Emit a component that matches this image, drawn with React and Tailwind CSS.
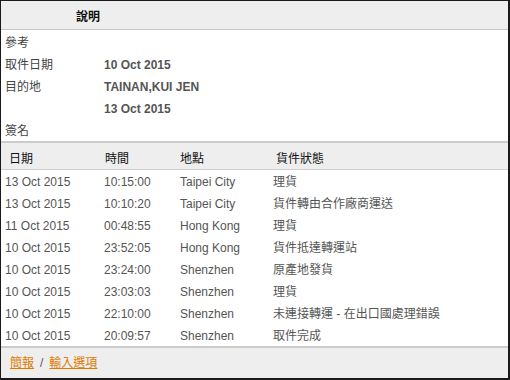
const details = [
  { label: "參考", value: "" },
  { label: "取件日期", value: "10 Oct 2015" },
  { label: "目的地", value: "TAINAN,KUI JEN" },
  { label: "", value: "13 Oct 2015" },
  { label: "簽名", value: "" },
];

const events = [
  ["13 Oct 2015", "10:15:00", "Taipei City", "理貨"],
  ["13 Oct 2015", "10:10:20", "Taipei City", "貨件轉由合作廠商運送"],
  ["11 Oct 2015", "00:48:55", "Hong Kong", "理貨"],
  ["10 Oct 2015", "23:52:05", "Hong Kong", "貨件抵達轉運站"],
  ["10 Oct 2015", "23:24:00", "Shenzhen", "原產地發貨"],
  ["10 Oct 2015", "23:03:03", "Shenzhen", "理貨"],
  ["10 Oct 2015", "22:10:00", "Shenzhen", "未連接轉運 - 在出口國處理錯誤"],
  ["10 Oct 2015", "20:09:57", "Shenzhen", "取件完成"],
];

function App() {
  return (
    <div className="w-[510px] h-[380px] bg-white font-['Liberation_Sans','Noto_Sans_CJK_TC',sans-serif] text-[12px]">
      <div className="w-full h-full flex flex-col border-t border-l border-r-2 border-b-2 border-[#1a1a1a]">

        {/* title bar */}
        <div className="h-[29px] leading-[29px] bg-[#eeeeee] border-b border-[#c8c8c8] pl-[75px] pt-[2px] font-bold text-[#111]">
          說明
        </div>

        {/* shipment details */}
        <div className="flex flex-col pt-[1px]">
          {details.map((d, i) => (
            <div key={i} className="h-[22px] leading-[22px] flex pt-[1px]">
              <span className="w-[103px] pl-[4px] text-[#444]">
                {d.label}
              </span>
              <span className="font-bold text-[#555]">
                {d.value}
              </span>
            </div>
          ))}
        </div>

        {/* history table */}
        <div className="border-t-2 border-[#cccccc] h-[29px] leading-[26px] bg-[#eeeeee] border-b border-b-[#cfcfcf] flex pt-[3px] text-[#111]">
          <span className="w-[103px] pl-[8px]">日期</span>
          <span className="w-[76px] pl-[1px]">時間</span>
          <span className="w-[96px]">地點</span>
          <span>貨件狀態</span>
        </div>

        <div className="flex flex-col">
          {events.map((e, i) => (
            <div key={i} className="h-[22px] leading-[22px] flex pt-[1px] text-[#555]">
              <span className="w-[103px] pl-[4px]">{e[0]}</span>
              <span className="w-[76px]">{e[1]}</span>
              <span className="w-[93px]">{e[2]}</span>
              <span>{e[3]}</span>
            </div>
          ))}
        </div>

        {/* footer links */}
        <div className="flex-1 bg-[#eeeeee] border-t-2 border-[#cccccc] flex items-center pl-[9px] gap-[6px] text-[#555]">
          <a href="#" className="text-[#e07b00] underline">簡報</a>
          <span>/</span>
          <a href="#" className="text-[#e07b00] underline">輸入選項</a>
        </div>

      </div>
    </div>
  );
}

export default App;
